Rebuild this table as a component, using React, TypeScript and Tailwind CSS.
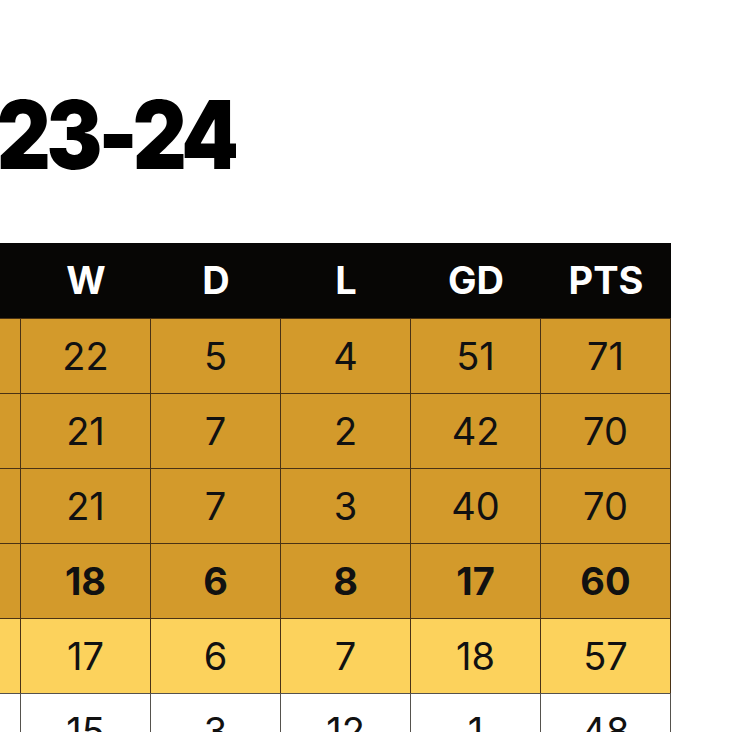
const rows = [
  { cells: ["22", "5", "4", "51", "71"], tone: "dark" },
  { cells: ["21", "7", "2", "42", "70"], tone: "dark" },
  { cells: ["21", "7", "3", "40", "70"], tone: "dark" },
  { cells: ["18", "6", "8", "17", "60"], tone: "dark", bold: true },
  { cells: ["17", "6", "7", "18", "57"], tone: "light" },
  { cells: ["15", "3", "12", "1", "48"], tone: "white" },
];

const toneClass: Record<string, string> = {
  dark: "bg-[#d39a2b] border-[#4a3214]",
  light: "bg-[#fcd25c] border-[#4a3214]",
  white: "bg-white border-[#55524d]",
};

export default function App() {
  return (
    <div className="min-h-screen w-full overflow-hidden bg-white font-['Inter','Liberation_Sans',sans-serif] text-[#111]">
      {/* season title, cut at the left edge */}
      <div className="flex h-[243px] w-[236px] justify-end overflow-hidden pt-[87px]">
        <h1 className="origin-right scale-x-[0.88] whitespace-nowrap text-[95px] font-black leading-none tracking-[-0.05em] text-black">
          23-24
        </h1>
      </div>

      {/* table */}
      <div className="w-[671px]">
        <div className="grid h-[75px] grid-cols-[21px_repeat(5,130px)] items-center bg-[#070605] text-[38px] font-bold text-white">
          <div />
          {["W", "D", "L", "GD", "PTS"].map((h) => (
            <div key={h} className="text-center">
              {h}
            </div>
          ))}
        </div>
        {rows.map((r, i) => (
          <div
            key={i}
            className={`grid h-[75px] grid-cols-[21px_repeat(5,130px)] ${r.bold ? "font-bold" : "font-normal"} text-[38px]`}
          >
            <div className={`border-t border-r ${toneClass[r.tone]}`} />
            {r.cells.map((c, j) => (
              <div
                key={j}
                className={`flex items-center justify-center border-t border-r ${toneClass[r.tone]}`}
              >
                {c}
              </div>
            ))}
          </div>
        ))}
      </div>
    </div>
  );
}
